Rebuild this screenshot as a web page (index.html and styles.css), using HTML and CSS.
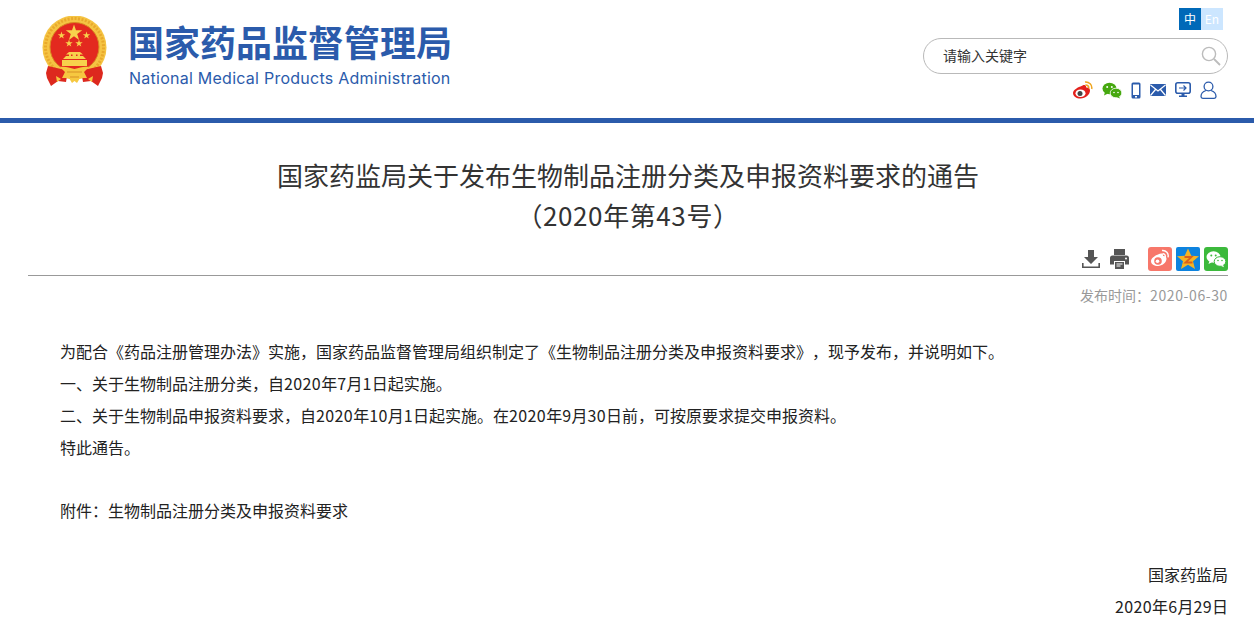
FILE: index.html
```html
<!DOCTYPE html>
<html lang="zh">
<head>
<meta charset="utf-8">
<title>国家药监局关于发布生物制品注册分类及申报资料要求的通告</title>
<link rel="stylesheet" href="styles.css">
</head>
<body>
<header class="header">
  <div class="brand">
    <svg class="emblem" width="67" height="71" viewBox="0 0 67 71">
      <circle cx="33.500" cy="31.500" r="32" fill="#f5c443"/>
      <circle cx="33.500" cy="31.500" r="29" fill="none" stroke="#e9a92c" stroke-width="3" stroke-dasharray="2 1.500"/>
      <circle cx="33.500" cy="31" r="24.500" fill="#e3291f" stroke="#d98a22"/>
      <polygon fill="#f7d24c" points="33,8.500 35,14.300 41.200,14.300 36.200,18 38.100,24 33,20.300 27.900,24 29.800,18 24.800,14.300 31,14.300"/>
      <polygon fill="#f7d24c" points="20.500,15.500 21.400,18.200 24.200,18.200 21.900,19.900 22.800,22.600 20.500,20.900 18.200,22.600 19.100,19.900 16.800,18.200 19.600,18.200"/>
      <polygon fill="#f7d24c" points="45.500,15.500 46.400,18.200 49.200,18.200 46.900,19.900 47.800,22.600 45.500,20.900 43.200,22.600 44.100,19.900 41.800,18.200 44.600,18.200"/>
      <polygon fill="#f7d24c" points="28,23.500 28.900,26.200 31.700,26.200 29.400,27.900 30.300,30.600 28,28.900 25.700,30.600 26.600,27.900 24.300,26.200 27.100,26.200"/>
      <polygon fill="#f7d24c" points="38,23.500 38.900,26.200 41.700,26.200 39.400,27.900 40.300,30.600 38,28.900 35.700,30.600 36.600,27.900 34.300,26.200 37.100,26.200"/>
      <path fill="#f7d24c" d="M28 36h11l3 2.500h-3v1.500h3l3 3H22l3-3h3v-1.500h-3zM21 44h25v6H21z"/>
      <path fill="#e3291f" d="M30 38.500h1.500V40H30zM35 38.500h1.500V40H35z"/>
      <path fill="#dd281e" d="M7 50l13 3 7 1-2 12-8-1-7 5-4-8-1-5zM60 50l-13 3-7 1 2 12 8-1 7 5 4-8 1-5z"/>
      <path fill="#f6c840" d="M19 51c5-1 9 .5 14.500 2 5.500-1.500 9.500-3 14.500-2l-5 5 3 6h-7l-3 5-2.500-2-2.500 2-3-5h-7l3-6z"/>
      <path d="M26 56h15M29 61h9" stroke="#d78f25" stroke-width="1.200"/>
      <path fill="#f6c840" d="M15 60l5 3-4 3zM52 60l-5 3 4 3z"/>
    </svg>
    <div class="brand-text">
      <div class="brand-cn">国家药品监督管理局</div>
      <div class="brand-en">National Medical Products Administration</div>
    </div>
  </div>
  <div class="tools">
    <div class="lang"><span class="lang-cn">中</span><span class="lang-en">En</span></div>
    <div class="search">
      <span class="search-text">请输入关键字</span>
      <svg width="20" height="20" viewBox="0 0 20 20" class="search-icon"><circle cx="8" cy="8" r="6.600" fill="none" stroke="#bcbcbc" stroke-width="1.400"/><path d="M13 13l6 6" stroke="#bcbcbc" stroke-width="1.800"/></svg>
    </div>
    <div class="links">
      <svg width="20" height="18" viewBox="0 0 20 18"><path fill="#e3201b" d="M7.500 5.500c3.500-2.500 6-2 5.600 1 2.200-.3 3.900.8 3.900 3 0 4-4.500 8-9.500 8C3.500 17.500 0 15.500 0 12c0-2.200 3-5 7.500-6.500z"/><ellipse cx="7.500" cy="12.300" rx="5" ry="3.800" fill="#fff"/><circle cx="7" cy="12.500" r="2.500" fill="#444"/><path d="M12 1c4-.5 7.500 3 6.700 7M12.500 4c2-.2 3.600 1.400 3.200 3.500" fill="none" stroke="#f0a61f" stroke-width="1.500"/></svg>
      <svg width="20" height="17" viewBox="0 0 20 17"><ellipse cx="7.500" cy="6.500" rx="7" ry="5.800" fill="#46a80f"/><path d="M3 10l-1 3.500 4-2z" fill="#46a80f"/><ellipse cx="14" cy="11" rx="5.800" ry="4.800" fill="#46a80f" stroke="#fff" stroke-width=".8"/><path d="M17 14.500l1 2-3.500-1.500z" fill="#46a80f"/><circle cx="5.200" cy="5" r="1" fill="#fff"/><circle cx="9.800" cy="5" r="1" fill="#fff"/><circle cx="12" cy="10.500" r=".8" fill="#fff"/><circle cx="16" cy="10.500" r=".8" fill="#fff"/></svg>
      <svg width="10" height="17" viewBox="0 0 10 17"><rect x=".5" y=".5" width="9" height="16" rx="1.500" fill="#2b5bab"/><rect x="2" y="2.500" width="6" height="10.500" fill="#fff"/><rect x="4" y="14" width="2" height="1.500" fill="#fff"/></svg>
      <svg width="16" height="12" viewBox="0 0 16 12"><rect width="16" height="12" rx="1" fill="#2b5bab"/><path d="M.5 1L8 7l7.500-6M.5 11.500L5.500 5.500M15.500 11.500L10.500 5.500" fill="none" stroke="#fff" stroke-width="1.200"/></svg>
      <svg width="16" height="16" viewBox="0 0 16 16"><rect x=".8" y=".8" width="14.400" height="10.400" rx="2" fill="#fff" stroke="#2b5bab" stroke-width="1.600"/><path d="M4 6h7M8.500 3.500L11 6l-2.500 2.500" fill="none" stroke="#2b5bab" stroke-width="1.200"/><path d="M6.500 11h3v2.500h2.500V15H4v-1.500h2.500z" fill="#2b5bab"/></svg>
      <svg width="17" height="18" viewBox="0 0 17 18"><circle cx="8.500" cy="5.500" r="4.400" fill="none" stroke="#2b5bab" stroke-width="1.300"/><path d="M6 9.500C3 10.500 1 12.500 1 15.500c0 1.200.8 1.800 1.800 1.800h11.400c1 0 1.800-.6 1.800-1.800 0-3-2-5-5-6" fill="none" stroke="#2b5bab" stroke-width="1.300"/></svg>
    </div>
  </div>
</header>
<main class="article">
  <h1 class="title">国家药监局关于发布生物制品注册分类及申报资料要求的通告<br><span class="title-no">（2020年第43号）</span></h1>
  <div class="actions">
    <svg width="18" height="18" viewBox="0 0 18 18"><path fill="#555" d="M6 0h6v7h4l-7 7-7-7h4zM0 13h1.600v3.400h14.800V13H18v5H0z"/></svg>
    <svg class="print" width="19" height="20" viewBox="0 0 19 20"><path fill="#555" d="M4 0h11v6H4zM2.500 6.500h14A2.500 2.500 0 0 1 19 9v6.500h-4V12H4v3.500H0V9a2.500 2.500 0 0 1 2.500-2.500zM5 13h9v7H5z"/><path d="M6.500 15h6M6.500 17h4" stroke="#fff"/><circle cx="16" cy="9.500" r="1" fill="#fff"/></svg>
    <svg class="share-first" width="24" height="24" viewBox="0 0 24 24"><rect width="24" height="24" rx="3" fill="#f7776a"/><path fill="#fff" d="M10 7.500c3.500-1.800 5.500-1 5 1.500 2.200-.3 3.500.9 3.500 2.800 0 3.700-4.300 7.200-8.500 7.200-3.800 0-7-1.700-7-5 0-2.200 3-5 7-6.500z"/><circle cx="10" cy="14" r="3.800" fill="#f7776a"/><circle cx="9.500" cy="14.300" r="1.800" fill="#fff"/><path d="M14 3.500c4-.5 7 2.800 6 6.800M14.500 6.800c1.900-.2 3.200 1.300 2.700 3.200" fill="none" stroke="#fff" stroke-width="1.400"/></svg>
    <svg width="24" height="24" viewBox="0 0 24 24"><rect width="24" height="24" rx="2" fill="#0d83df"/><polygon fill="#f5b324" points="12,1.500 15.300,8.700 23,9.300 17,14.200 19,22 12,17.800 5,22 7,14.200 1,9.300 8.700,8.700"/><path d="M8.500 10h7l-6 5.500h7" fill="none" stroke="#d9601e" stroke-width="1.800"/></svg>
    <svg width="24" height="24" viewBox="0 0 24 24"><rect width="24" height="24" rx="3" fill="#3cb93c"/><ellipse cx="9.500" cy="10" rx="7" ry="5.800" fill="#fff"/><path d="M5.500 14l-1 3 3.500-1.800z" fill="#fff"/><ellipse cx="16" cy="14.500" rx="5.800" ry="4.800" fill="#fff" stroke="#3cb93c"/><path d="M19 18l1 2.200-3.300-1.500z" fill="#fff"/><circle cx="7.300" cy="8.500" r="1" fill="#3cb93c"/><circle cx="11.700" cy="8.500" r="1" fill="#3cb93c"/><circle cx="14" cy="13.500" r=".8" fill="#3cb93c"/><circle cx="18" cy="13.500" r=".8" fill="#3cb93c"/></svg>
  </div>
  <div class="date">发布时间：<span class="date-num">2020-06-30</span></div>
  <div class="content">
    <p>为配合《药品注册管理办法》实施，国家药品监督管理局组织制定了《生物制品注册分类及申报资料要求》，现予发布，并说明如下。</p>
    <p>一、关于生物制品注册分类，自<span class="num">2020</span>年<span class="num">7</span>月<span class="num">1</span>日起实施。</p>
    <p>二、关于生物制品申报资料要求，自<span class="num">2020</span>年<span class="num">10</span>月<span class="num">1</span>日起实施。在<span class="num">2020</span>年<span class="num">9</span>月<span class="num">30</span>日前，可按原要求提交申报资料。</p>
    <p>特此通告。</p>
    <p class="attach">附件：生物制品注册分类及申报资料要求</p>
    <p class="sign">国家药监局</p>
    <p class="sign-date"><span class="num">2020</span>年<span class="num">6</span>月<span class="num">29</span>日</p>
  </div>
</main>
</body>
</html>
```
FILE: styles.css
```css
html, body { margin: 0; padding: 0; background: #fff; overflow: hidden; height: 620px; }
body { font-family: "Noto Sans CJK SC", "Liberation Sans", sans-serif; color: #333; text-spacing-trim: space-all; }
.header { height: 118px; border-bottom: 5px solid #2b5bab; display: flex; justify-content: space-between; padding: 0 26px 0 41px; }
.brand { display: flex; align-items: flex-start; padding-top: 16px; }
.emblem { display: block; }
.brand-text { margin-left: 20px; margin-top: 2px; color: #2b5bab; }
.brand-cn { font-size: 36px; line-height: 46px; font-weight: 700; white-space: nowrap; }
.brand-en { font-family: Inter, "Liberation Sans", sans-serif; font-size: 16px; line-height: 22px; letter-spacing: .25px; margin-top: 3px; margin-left: 1px; white-space: nowrap; }
.tools { width: 305px; display: flex; flex-direction: column; align-items: flex-end; padding-top: 8px; }
.lang { display: flex; margin-right: 5px; font-size: 12px; line-height: 22px; text-align: center; color: #fff; }
.lang-cn { width: 22px; background: #0069b8; }
.lang-en { width: 22px; background: #cce6ff; }
.search { width: 305px; height: 36px; margin-top: 8px; box-sizing: border-box; border: 1px solid #b9b9b9; border-radius: 18px; display: flex; align-items: center; justify-content: space-between; padding: 0 6px 0 19px; }
.search-text { font-size: 14px; line-height: 20px; margin-top: -2px; color: #333; }
.links { display: flex; align-items: center; gap: 9px; margin-top: 7px; margin-right: 11px; }
.links svg { display: block; }
.article { padding: 0 26px 0 28px; }
.title { margin: 32px 0 0; font-size: 26px; line-height: 40px; font-weight: 400; text-align: center; color: #333; }
.title-no { letter-spacing: .6px; }
.actions { display: flex; justify-content: flex-end; align-items: center; gap: 4px; height: 27px; margin-top: 10px; border-bottom: 1px solid #999; padding-bottom: 3px; }
.print { margin-left: 6px; }
.share-first { margin-left: 15px; }
.date { font-size: 14px; line-height: 20px; color: #999; text-align: right; margin-top: 9px; }
.date-num { letter-spacing: .6px; }
.content { margin-top: 30px; padding: 0 0 0 32px; }
.content p { margin: 0; font-size: 16px; line-height: 32px; color: #222; }
.num { letter-spacing: .4px; }
.content .attach { margin-top: 31px; }
.content .sign { margin-top: 32px; text-align: right; }
.content .sign-date { text-align: right; }
```
